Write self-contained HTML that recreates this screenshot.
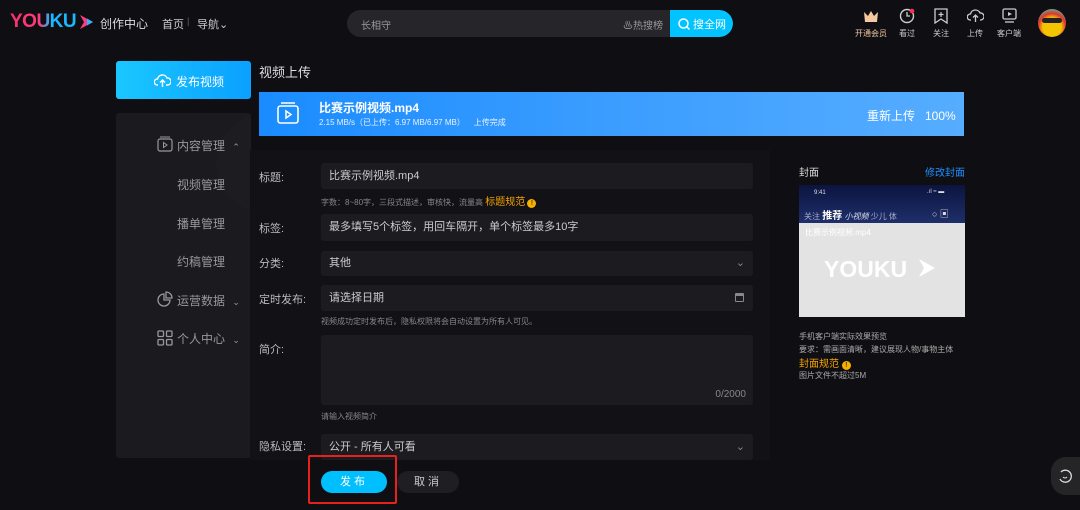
<!DOCTYPE html>
<html><head><meta charset="utf-8"><style>
*{margin:0;padding:0;box-sizing:border-box}
body{width:1080px;height:510px;background:#0f0f13;font-family:"Liberation Sans","Noto Sans CJK SC",sans-serif;color:#ccc;position:relative;overflow:hidden}
.a{position:absolute;white-space:nowrap}
.inp{position:absolute;left:321px;width:432px;background:#1b1b20;border-radius:3px;font-size:11px;color:#ccc;padding-left:8px}
.lbl{position:absolute;left:259px;font-size:11px;color:#bbb}
.hint{position:absolute;left:321px;font-size:8px;color:#888}
.mi{position:absolute;font-size:12px;color:#999}
.ic{position:absolute;text-align:center;width:34px;font-size:8px;color:#ccc}
</style></head><body>
<!-- header -->
<div class="a" style="left:10px;top:11px;font-size:19px;font-weight:bold;letter-spacing:-0.5px;background:linear-gradient(90deg,#ff2e6e,#ff3d7e 45%,#1ab8ff 60%);-webkit-background-clip:text;color:transparent">YOUKU</div>
<svg class="a" style="left:78px;top:13px" width="18" height="18" viewBox="0 0 18 18"><path d="M2 2 L15 9 L2 16 L6 9Z" fill="#ff3a7d"/><path d="M9 5.5 L15 9 L9 12.5Z" fill="#25b8ff"/></svg>
<div class="a" style="left:100px;top:15px;font-size:12px;color:#ddd">创作中心</div>
<div class="a" style="left:162px;top:16px;font-size:11px;color:#ccc">首页</div>
<div class="a" style="left:187px;top:16px;font-size:9px;color:#666">|</div>
<div class="a" style="left:197px;top:16px;font-size:11px;color:#ccc">导航⌄</div>
<div class="a" style="left:347px;top:10px;width:386px;height:27px;border-radius:14px;background:#26262a;overflow:hidden">
 <div class="a" style="left:14px;top:7px;font-size:10px;color:#999">长相守</div>
 <div class="a" style="left:276px;top:7px;font-size:10px;color:#999">♨热搜榜</div>
 <div class="a" style="left:323px;top:0;width:63px;height:27px;background:#00c3ff;border-radius:0 14px 14px 0;color:#fff;font-size:11px;padding:6px 0 0 8px">
  <svg style="vertical-align:-2px" width="12" height="12"><circle cx="5.5" cy="5.5" r="4.5" fill="none" stroke="#fff" stroke-width="1.5"/><path d="M9 9L11.5 11.5" stroke="#fff" stroke-width="1.5"/></svg> 搜全网</div>
</div>
<svg class="a" style="left:863px;top:9px" width="16" height="14"><path d="M1 3 L5 7 L8 2 L11 7 L15 3 L14 13 L2 13Z" fill="#f5c8a0"/></svg>
<div class="ic" style="left:854px;top:28px;color:#f0c8a0">开通会员</div>
<svg class="a" style="left:899px;top:8px" width="16" height="16"><circle cx="8" cy="8" r="6.5" fill="none" stroke="#ccc" stroke-width="1.4"/><path d="M8 4V8H11" stroke="#ccc" fill="none" stroke-width="1.3"/><circle cx="13" cy="3" r="2.3" fill="#ff2e55"/></svg>
<div class="ic" style="left:890px;top:28px">看过</div>
<svg class="a" style="left:934px;top:8px" width="14" height="16"><path d="M1 1H13V15L7 11L1 15Z" fill="none" stroke="#ccc" stroke-width="1.3"/><path d="M7 4V9M4.5 6.5H9.5" stroke="#ccc" stroke-width="1.2"/></svg>
<div class="ic" style="left:924px;top:28px">关注</div>
<svg class="a" style="left:967px;top:8px" width="17" height="15"><path d="M4 12H3A3 3 0 0 1 3.5 6A5 5 0 0 1 13 5A3.5 3.5 0 0 1 14 12H13" fill="none" stroke="#ccc" stroke-width="1.3"/><path d="M8.5 14V7M6 9.5L8.5 7L11 9.5" fill="none" stroke="#ccc" stroke-width="1.3"/></svg>
<div class="ic" style="left:958px;top:28px">上传</div>
<svg class="a" style="left:1002px;top:8px" width="15" height="16"><rect x="1" y="1" width="13" height="10" rx="1.5" fill="none" stroke="#ccc" stroke-width="1.3"/><path d="M6 4L10 6L6 8Z" fill="#ccc"/><path d="M3 14H12" stroke="#ccc" stroke-width="1.3"/></svg>
<div class="ic" style="left:992px;top:28px">客户端</div>
<div class="a" style="left:1038px;top:9px;width:28px;height:28px;border-radius:50%;background:radial-gradient(circle at 50% 65%,#f5c400 40%,#d33 60%,#6a8 80%)"></div>
<div class="a" style="left:1042px;top:18px;width:20px;height:5px;background:#222;border-radius:3px"></div>

<!-- sidebar -->
<div class="a" style="left:116px;top:61px;width:135px;height:38px;border-radius:3px;background:linear-gradient(90deg,#1ac7ff,#0aa0ff);color:#fff;font-size:12px;padding:12px 0 0 38px">
<svg class="a" style="left:38px;top:12px" width="17" height="14"><path d="M4 12H3A3 3 0 0 1 3.5 6A5 5 0 0 1 13 5A3.5 3.5 0 0 1 14 12H12" fill="none" stroke="#fff" stroke-width="1.4"/><path d="M8.5 14V7M6 9.5L8.5 7L11 9.5" fill="none" stroke="#fff" stroke-width="1.4"/></svg>
<span style="margin-left:22px">发布视频</span></div>
<div class="a" style="left:116px;top:113px;width:135px;height:345px;background:#1a1a1f;border-radius:3px;overflow:hidden">
 <div class="a" style="left:100px;top:0;width:100px;height:100px;border-radius:50%;background:#1c1c21"></div>
</div>
<svg class="a" style="left:157px;top:136px" width="16" height="16"><rect x="1" y="3" width="14" height="12" rx="2" fill="none" stroke="#999" stroke-width="1.2"/><path d="M3 1H13" stroke="#999"/><path d="M6.5 6.5L10 9L6.5 11.5Z" fill="none" stroke="#999"/></svg>
<div class="mi" style="left:177px;top:137px">内容管理 <span style="font-size:9px;margin-left:4px">⌃</span></div>
<div class="mi" style="left:177px;top:176px">视频管理</div>
<div class="mi" style="left:177px;top:215px">播单管理</div>
<div class="mi" style="left:177px;top:253px">约稿管理</div>
<svg class="a" style="left:157px;top:291px" width="16" height="16"><path d="M7 3A6 6 0 1 0 13 9H7Z" fill="none" stroke="#999" stroke-width="1.3"/><path d="M9 1V7H15A6 6 0 0 0 9 1Z" fill="none" stroke="#999" stroke-width="1.3"/></svg>
<div class="mi" style="left:177px;top:292px">运营数据 <span style="font-size:9px;margin-left:4px">⌄</span></div>
<svg class="a" style="left:157px;top:330px" width="16" height="16" fill="none" stroke="#999" stroke-width="1.3"><rect x="1" y="1" width="5.5" height="5.5" rx="1"/><rect x="9.5" y="1" width="5.5" height="5.5" rx="1"/><rect x="1" y="9.5" width="5.5" height="5.5" rx="1"/><rect x="9.5" y="9.5" width="5.5" height="5.5" rx="1"/></svg>
<div class="mi" style="left:177px;top:330px">个人中心 <span style="font-size:9px;margin-left:4px">⌄</span></div>

<!-- main -->
<div class="a" style="left:259px;top:62px;font-size:13px;color:#ddd">视频上传</div>
<div class="a" style="left:259px;top:92px;width:705px;height:44px;background:linear-gradient(90deg,#1a8cff,#3b9dff 50%,#56adff)">
 <svg class="a" style="left:18px;top:9px" width="22" height="24"><rect x="1" y="5" width="20" height="17" rx="2.5" fill="none" stroke="#fff" stroke-width="1.6"/><path d="M4 2H18" stroke="#fff" stroke-width="1.5"/><path d="M9 10L14 13.5L9 17Z" fill="none" stroke="#fff" stroke-width="1.5"/></svg>
 <div class="a" style="left:60px;top:7px;font-size:12px;font-weight:bold;color:#fff">比赛示例视频.mp4</div>
 <div class="a" style="left:60px;top:25px;font-size:8px;color:#e8f2ff">2.15 MB/s（已上传：6.97 MB/6.97 MB）&nbsp;&nbsp;&nbsp;&nbsp;上传完成</div>
 <div class="a" style="left:608px;top:15px;font-size:12px;color:#fff">重新上传&nbsp;&nbsp;&nbsp;100%</div>
</div>
<div class="a" style="left:250px;top:150px;width:520px;height:310px;background:#111116"></div>
<div class="lbl" style="top:169px">标题:</div>
<div class="inp" style="top:163px;height:26px;line-height:26px">比赛示例视频.mp4</div>
<div class="hint" style="top:193px">字数：8~80字，三段式描述，审核快，流量高 <span style="font-size:10px;color:#f5a300">标题规范</span> <span style="display:inline-block;width:9px;height:9px;border-radius:50%;background:#f5b000;color:#000;font-size:7px;text-align:center;line-height:9px">!</span></div>
<div class="lbl" style="top:220px">标签:</div>
<div class="inp" style="top:214px;height:27px;line-height:27px">最多填写5个标签，用回车隔开，单个标签最多10字</div>
<div class="lbl" style="top:255px">分类:</div>
<div class="inp" style="top:251px;height:25px;line-height:25px">其他<span class="a" style="right:8px;top:0;color:#888">⌄</span></div>
<div class="lbl" style="top:291px">定时发布:</div>
<div class="inp" style="top:285px;height:26px;line-height:26px">请选择日期<span class="a" style="right:9px;top:8px;width:9px;height:9px;border:1.3px solid #888;border-top-width:3px;border-radius:1px"></span></div>
<div class="hint" style="top:316px">视频成功定时发布后，隐私权限将会自动设置为所有人可见。</div>
<div class="lbl" style="top:341px">简介:</div>
<div class="inp" style="top:335px;height:70px"><span class="a" style="right:7px;bottom:5px;color:#888;font-size:10px">0/2000</span></div>
<div class="hint" style="top:411px">请输入视频简介</div>
<div class="lbl" style="top:438px">隐私设置:</div>
<div class="inp" style="top:434px;height:26px;line-height:26px">公开 - 所有人可看<span class="a" style="right:8px;top:0;color:#888">⌄</span></div>
<div class="a" style="left:321px;top:471px;width:66px;height:22px;border-radius:11px;background:#00bfff;color:#fff;font-size:11px;text-align:center;line-height:22px;letter-spacing:3px">发布</div>
<div class="a" style="left:397px;top:471px;width:62px;height:22px;border-radius:11px;background:#1e1e23;color:#ccc;font-size:11px;text-align:center;line-height:22px;letter-spacing:3px">取消</div>
<div class="a" style="left:308px;top:455px;width:89px;height:49px;border:2px solid #e8201e;border-radius:2px"></div>

<!-- cover -->
<div class="a" style="left:799px;top:164px;font-size:10px;color:#ddd">封面</div>
<div class="a" style="left:925px;top:164px;font-size:10px;color:#1e8fff">修改封面</div>
<div class="a" style="left:799px;top:185px;width:166px;height:132px;background:#e3e3e3;overflow:hidden">
 <div class="a" style="left:0;top:0;width:166px;height:38px;background:linear-gradient(180deg,#0c1440,#1e2f6a)"></div>
 <div class="a" style="left:15px;top:5px;font-size:6px;color:#ddd">9:41</div>
 <div class="a" style="left:128px;top:4px;font-size:6px;color:#ddd">.ıl ≈ ▬</div>
 <div class="a" style="left:5px;top:22px;font-size:8px;color:#aac">关注 <b style="color:#fff;font-size:10px">推荐</b> <i style="color:#dde">小视频</i> 少儿 体</div>
 <div class="a" style="left:133px;top:22px;font-size:9px;color:#ddd">○ ▣</div>
 <div class="a" style="left:6px;top:42px;font-size:8px;color:#fff">比赛示例视频.mp4</div>
 <div class="a" style="left:25px;top:71px;font-size:23px;font-weight:bold;color:#fff;letter-spacing:0">YOUKU</div>
 <svg class="a" style="left:118px;top:72px" width="20" height="22"><path d="M2 2 L18 11 L2 20 L7 11Z" fill="#fff"/></svg>
</div>
<div class="a" style="left:799px;top:331px;font-size:8px;color:#aaa">手机客户端实际效果预览</div>
<div class="a" style="left:799px;top:344px;font-size:8px;color:#aaa">要求：需画面清晰，建议展现人物/事物主体</div>
<div class="a" style="left:799px;top:355px;font-size:10px;color:#f5a300">封面规范 <span style="display:inline-block;width:9px;height:9px;border-radius:50%;background:#f5b000;color:#000;font-size:7px;text-align:center;line-height:9px">!</span></div>
<div class="a" style="left:799px;top:370px;font-size:8px;color:#aaa">图片文件不超过5M</div>
<div class="a" style="left:1051px;top:457px;width:29px;height:38px;border-radius:15px 0 0 15px;background:#252528"></div>
<svg class="a" style="left:1057px;top:468px" width="16" height="16"><path d="M4 4A6 6 0 1 1 3 11" fill="none" stroke="#ddd" stroke-width="1.3"/><path d="M6 9Q8 11 10 9" stroke="#ddd" fill="none"/></svg>
</body></html>
